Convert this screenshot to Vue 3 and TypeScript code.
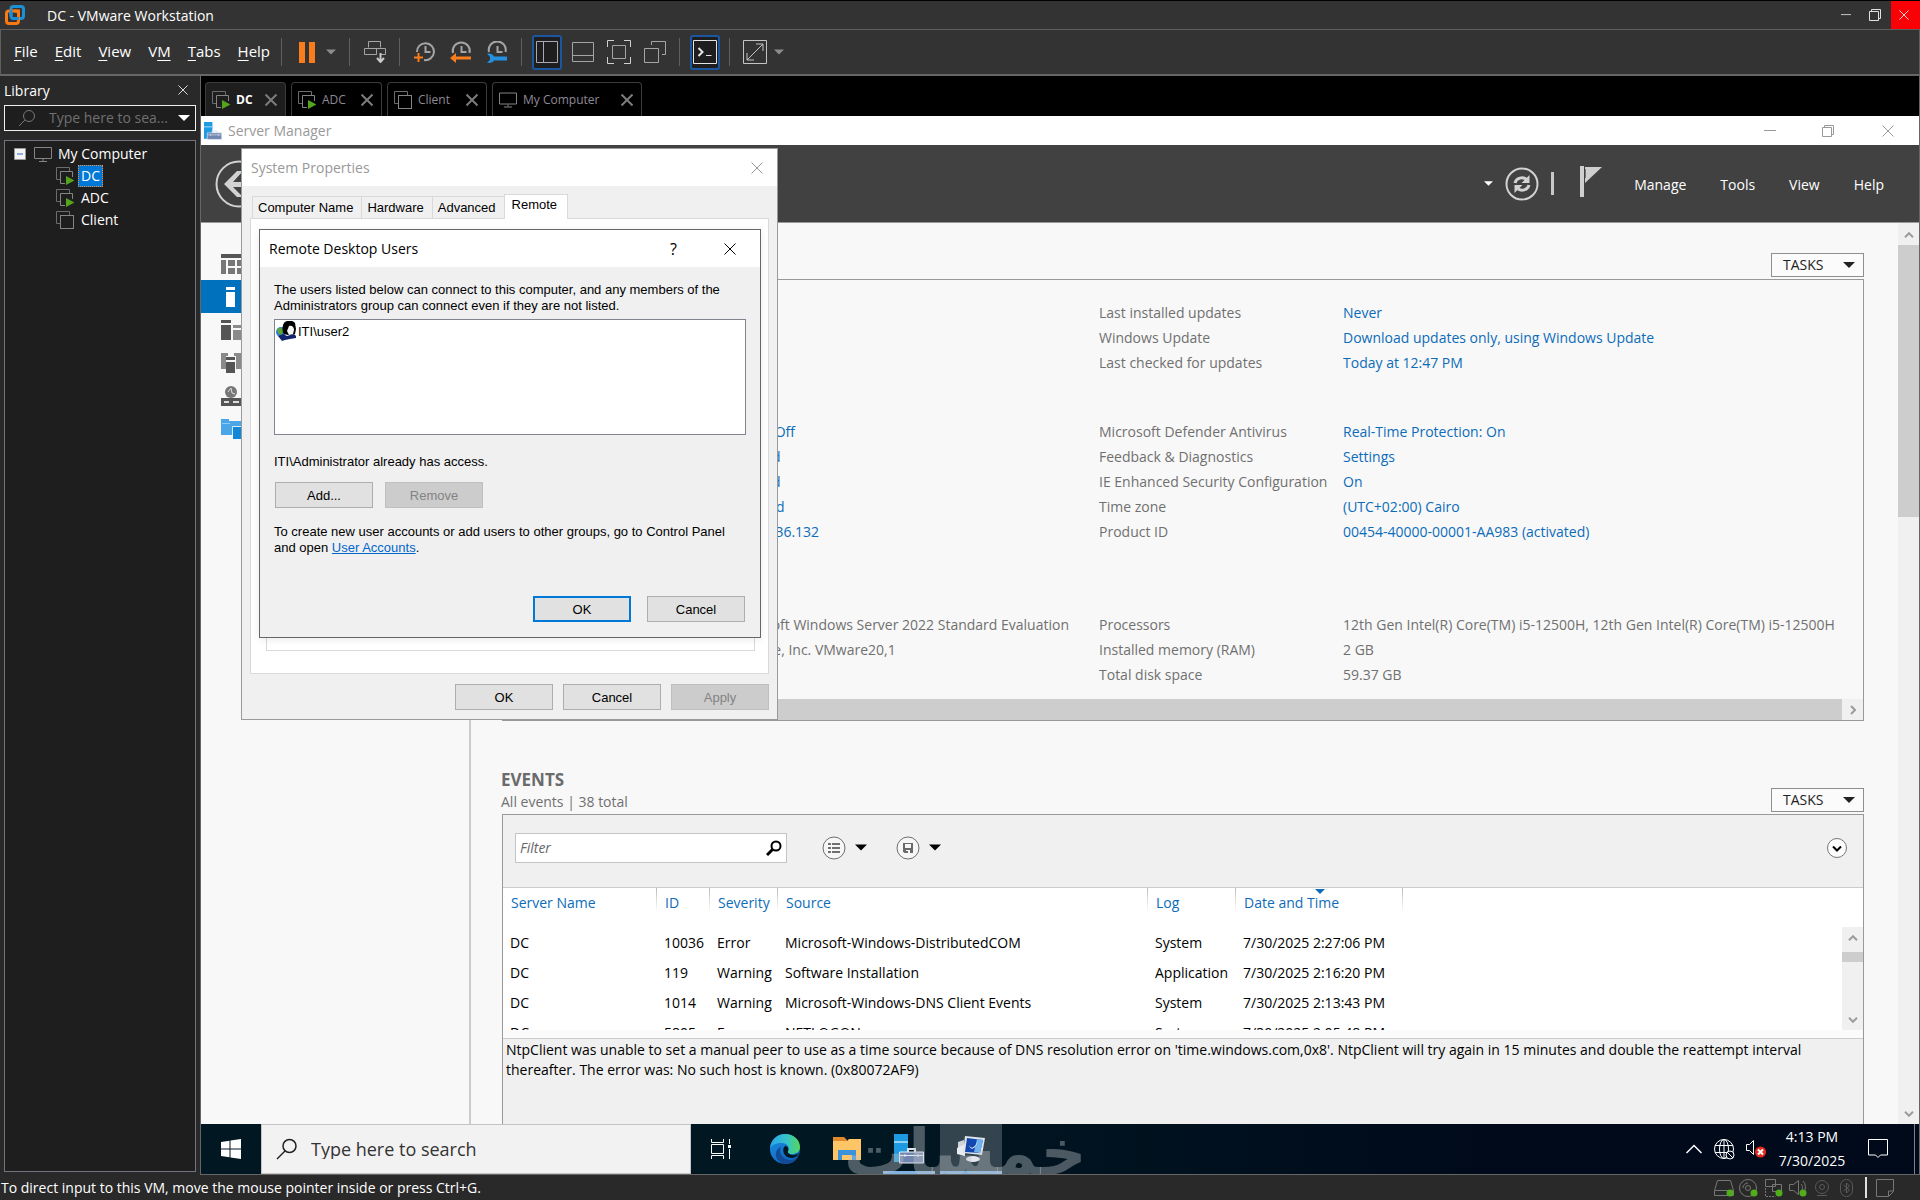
<script setup lang="ts">
interface VmTab { name: string; icon: string; width: number; active?: boolean }
interface PropRow { left: string; label: string; value: string }
interface PropGroup { link: boolean; rows: PropRow[] }
interface EventRow { server: string; id: string; severity: string; source: string; log: string; date: string }

const menus: [string, string, string][] = [
  ['', 'F', 'ile'],
  ['', 'E', 'dit'],
  ['', 'V', 'iew'],
  ['V', 'M', ''],
  ['', 'T', 'abs'],
  ['', 'H', 'elp'],
]

const tabs: VmTab[] = [
  { name: 'DC', icon: '#vm-on', width: 81, active: true },
  { name: 'ADC', icon: '#vm-on', width: 91 },
  { name: 'Client', icon: '#vm-off', width: 100 },
  { name: 'My Computer', icon: '#monitor', width: 150 },
]

const machines = [
  { name: 'DC', icon: '#vm-on', selected: true },
  { name: 'ADC', icon: '#vm-on', selected: false },
  { name: 'Client', icon: '#vm-off', selected: false },
]

const smMenus = ['Manage', 'Tools', 'View', 'Help']

const groups: PropGroup[] = [
  {
    link: true,
    rows: [
      { left: '', label: 'Last installed updates', value: 'Never' },
      { left: '', label: 'Windows Update', value: 'Download updates only, using Windows Update' },
      { left: '', label: 'Last checked for updates', value: 'Today at 12:47 PM' },
    ],
  },
  {
    link: true,
    rows: [
      { left: 'Public: Off', label: 'Microsoft Defender Antivirus', value: 'Real-Time Protection: On' },
      { left: 'Enabled', label: 'Feedback & Diagnostics', value: 'Settings' },
      { left: 'Enabled', label: 'IE Enhanced Security Configuration', value: 'On' },
      { left: 'Disabled', label: 'Time zone', value: '(UTC+02:00) Cairo' },
      { left: '172.16.36.132', label: 'Product ID', value: '00454-40000-00001-AA983 (activated)' },
    ],
  },
  {
    link: false,
    rows: [
      { left: 'Microsoft Windows Server 2022 Standard Evaluation', label: 'Processors', value: '12th Gen Intel(R) Core(TM) i5-12500H, 12th Gen Intel(R) Core(TM) i5-12500H' },
      { left: 'VMware, Inc. VMware20,1', label: 'Installed memory (RAM)', value: '2 GB' },
      { left: '', label: 'Total disk space', value: '59.37 GB' },
    ],
  },
]

const columns = ['Server Name', 'ID', 'Severity', 'Source', 'Log', 'Date and Time']

const events: EventRow[] = [
  { server: 'DC', id: '10036', severity: 'Error', source: 'Microsoft-Windows-DistributedCOM', log: 'System', date: '7/30/2025 2:27:06 PM' },
  { server: 'DC', id: '119', severity: 'Warning', source: 'Software Installation', log: 'Application', date: '7/30/2025 2:16:20 PM' },
  { server: 'DC', id: '1014', severity: 'Warning', source: 'Microsoft-Windows-DNS Client Events', log: 'System', date: '7/30/2025 2:13:43 PM' },
  { server: 'DC', id: '5805', severity: 'Error', source: 'NETLOGON', log: 'System', date: '7/30/2025 2:05:48 PM' },
]

const propTabs = ['Computer Name', 'Hardware', 'Advanced', 'Remote']
</script>

<template>
  <div class="app">
    <svg class="sprite" aria-hidden="true">
      <symbol id="vm-off" viewBox="0 0 18 18">
        <path d="M4 12.5H.5V.5h13V4" fill="none" stroke="#6c6c6c" />
        <rect x="4.5" y="4.5" width="13" height="13" fill="none" stroke="#858585" />
      </symbol>
      <symbol id="vm-on" viewBox="0 0 18 18">
        <path d="M4 12.5H.5V.5h13V4" fill="none" stroke="#6c6c6c" />
        <path d="M9 16.5H4.5v-12h12V10" fill="none" stroke="#858585" />
        <path d="M10 9l8.500 4.500L10 18z" fill="#55a51c" />
      </symbol>
      <symbol id="monitor" viewBox="0 0 18 15">
        <path d="M.5.500h17v11H.5zM9 12v2M5 14.500h8" fill="none" stroke="#858585" />
      </symbol>
      <symbol id="cross" viewBox="0 0 12 12">
        <path d="M.5.500l11 11M11.500.500l-11 11" fill="none" stroke="currentColor" />
      </symbol>
      <symbol id="restore" viewBox="0 0 12 12">
        <path d="M.5 2.500h9v9h-9zM2.500 2.500v-2h9v9h-2" fill="none" stroke="currentColor" />
      </symbol>
      <symbol id="minimize" viewBox="0 0 12 12">
        <path d="M0 5.500h12" fill="none" stroke="currentColor" />
      </symbol>
      <symbol id="tri" viewBox="0 0 12 6">
        <path d="M0 0h12L6 6z" fill="currentColor" />
      </symbol>
      <symbol id="chev" viewBox="0 0 10 6">
        <path d="M1 5.200l4-4 4 4" fill="none" stroke="#9c9c9c" stroke-width="2" />
      </symbol>
      <symbol id="toolbox" viewBox="0 0 32 30">
        <path d="M1 0h14v28H1z" fill="#1e9be0" />
        <path d="M1 8h14" stroke="#8fd0f5" stroke-width="2" />
        <path d="M15 18v-3h7v3" fill="none" stroke="#dfe4ee" stroke-width="2" />
        <path d="M6.500 18h24v11h-24z" fill="#6f86b0" stroke="#e8edf5" />
        <path d="M7 21.500h23M12 20v3M25 20v3" stroke="#e8edf5" />
      </symbol>
    </svg>

    <header class="titlebar">
      <svg class="logo" viewBox="0 0 20 20">
        <rect x="6" y="1.500" width="12.500" height="12" rx="2.500" fill="none" stroke="#1c8fd6" stroke-width="3" />
        <rect x="1.500" y="6" width="12" height="12.500" rx="2.500" fill="none" stroke="#f97a14" stroke-width="3" />
        <path d="M6 5v6M7 13.500h7" stroke="#1c8fd6" stroke-width="3" fill="none" />
        <path d="M9 6h4.500v3" stroke="#f97a14" stroke-width="3" fill="none" />
      </svg>
      <h1>DC - VMware Workstation</h1>
      <button class="wbtn" aria-label="Minimize"><svg width="10" height="10"><use href="#minimize" /></svg></button>
      <button class="wbtn" aria-label="Restore"><svg width="12" height="12"><use href="#restore" /></svg></button>
      <button class="wbtn danger" aria-label="Close"><svg width="10" height="10"><use href="#cross" /></svg></button>
    </header>

    <div class="toolbar">
      <nav class="menus">
        <button v-for="m in menus" :key="m.join('')">{{ m[0] }}<u>{{ m[1] }}</u>{{ m[2] }}</button>
      </nav>
      <i class="sep"></i>
      <button class="tool" aria-label="Suspend"><svg width="16" height="21" viewBox="0 0 16 21"><path d="M0 0h6v21H0zM10 0h6v21h-6z" fill="#f97d1c" /></svg></button>
      <button class="drop" aria-label="Power menu"><svg width="10" height="6"><use href="#tri" /></svg></button>
      <i class="sep"></i>
      <button class="tool" aria-label="Send keys"><svg width="22" height="22" viewBox="0 0 22 22" fill="none" stroke="#a5a5a5"><path d="M4.500 6.500v-6h12v6M.500 7.500h12v6H.500zM12.500 13.500v-6h9v6h-5" /><path d="M16.500 12v8M13 17l3.500 4 3.500-4" stroke="#c8c8c8" stroke-width="2" /></svg></button>
      <i class="sep"></i>
      <button class="tool" aria-label="Take snapshot"><svg width="22" height="22" viewBox="0 0 22 22" fill="none"><path d="M3 11a8.500 8.500 0 1 1 7 8M11.500 5v6h5" stroke="#a5a5a5" stroke-width="2" /><path d="M0 16.500h9M4.500 12v9" stroke="#f97d1c" stroke-width="2" /></svg></button>
      <button class="tool" aria-label="Revert snapshot"><svg width="22" height="22" viewBox="0 0 22 22" fill="none"><path d="M3 12a8.500 8.500 0 1 1 16.500 0M11.500 5v6h5" stroke="#a5a5a5" stroke-width="2" /><path d="M0 17l6-5v3.500h15v3H6V22z" fill="#f97d1c" /></svg></button>
      <button class="tool" aria-label="Manage snapshots"><svg width="22" height="22" viewBox="0 0 22 22" fill="none"><path d="M3 11a8.500 8.500 0 1 1 16.500 0M11.500 5v6h5" stroke="#a5a5a5" stroke-width="2" /><path d="M1 12.500c3 0 6 .500 7 3h13v4H8c-1 2-4 3-7 2l3-2.500v-3z" fill="#2490df" /></svg></button>
      <i class="sep"></i>
      <button class="tool" aria-label="Show library"><span class="on"><svg width="22" height="22" viewBox="0 0 22 22" fill="none" stroke="#a9a9b3"><path d="M.500.500h21v21H.500zM7.500 1v20" /></svg></span></button>
      <button class="tool" aria-label="Thumbnail bar"><svg width="22" height="22" viewBox="0 0 22 22" fill="none" stroke="#a5a5a5"><path d="M.500 1.500h21v19H.500zM1 14.500h20" /></svg></button>
      <button class="tool" aria-label="Full screen"><svg width="24" height="24" viewBox="0 0 24 24" fill="none"><path d="M.500 7V.500H7M17 .500h6.500V7M23.500 17v6.500H17M7 23.500H.500V17" stroke="#d0d0d0" /><path d="M5.500 5.500h13v13h-13z" stroke="#a5a5a5" /></svg></button>
      <button class="tool" aria-label="Unity"><svg width="22" height="22" viewBox="0 0 22 22" fill="none" stroke="#a5a5a5"><path d="M.500 7.500h14v14H.500zM7.500 4V.500h14v13H18" /></svg></button>
      <i class="sep"></i>
      <button class="tool" aria-label="Console view"><span class="on"><svg width="24" height="24" viewBox="0 0 24 24" fill="none" stroke="#e4e4e4"><path d="M.500.500h23v23H.500z" /><path d="M5.500 8l4 4-4 4" stroke-width="2" /><path d="M13 15.500h5.500" /></svg></span></button>
      <i class="sep"></i>
      <button class="tool" aria-label="Stretch"><svg width="24" height="24" viewBox="0 0 24 24" fill="none" stroke="#c4c4c4"><path d="M.500.500h23v23H.500zM4 20L20 4M13 4h7v7M4 13v7h7" /></svg></button>
      <button class="drop" aria-label="Stretch menu"><svg width="10" height="6"><use href="#tri" /></svg></button>
    </div>

    <div class="body">
      <aside class="library">
        <div class="lib-head"><h2>Library</h2><button aria-label="Close library"><svg width="10" height="10"><use href="#cross" /></svg></button></div>
        <label class="lib-search">
          <svg width="18" height="18" viewBox="0 0 18 18" fill="none" stroke="#777"><circle cx="11" cy="7" r="5.500" /><path d="M7 11l-6 6" /></svg>
          <input type="text" placeholder="Type here to sea..." aria-label="Search library" />
          <svg class="lib-tri" width="12" height="6"><use href="#tri" /></svg>
        </label>
        <div class="tree">
          <div class="node root">
            <svg width="12" height="12" viewBox="0 0 12 12"><path d="M.500.500h11v11H.500z" fill="#f4f4f4" stroke="#9a9a9a" /><path d="M3 6h6" stroke="#2a62c4" /></svg>
            <svg class="mon" width="18" height="15"><use href="#monitor" /></svg>
            <span>My Computer</span>
          </div>
          <div v-for="m in machines" :key="m.name" class="node leaf">
            <svg width="18" height="18"><use :href="m.icon" /></svg>
            <span :class="{ sel: m.selected }">{{ m.name }}</span>
          </div>
        </div>
      </aside>

      <main class="stage">
        <div class="tabs">
          <div v-for="t in tabs" :key="t.name" class="tab" :class="{ active: t.active }" :style="{ width: t.width + 'px' }">
            <svg width="18" height="18"><use :href="t.icon" /></svg>
            <span>{{ t.name }}</span>
            <button :aria-label="'Close ' + t.name"><svg width="12" height="12"><use href="#cross" stroke-width="2" /></svg></button>
          </div>
        </div>

        <div class="screen">
          <div class="sm-title">
            <svg width="20" height="18"><use href="#toolbox" /></svg>
            <span>Server Manager</span>
            <div class="sm-ctl">
              <button aria-label="Minimize"><svg width="12" height="12"><use href="#minimize" /></svg></button>
              <button aria-label="Restore"><svg width="12" height="12"><use href="#restore" /></svg></button>
              <button aria-label="Close"><svg width="12" height="12"><use href="#cross" /></svg></button>
            </div>
          </div>

          <div class="sm-head">
            <button class="back" aria-label="Back"><svg width="48" height="48" viewBox="0 0 48 48" fill="none" stroke="#d2d2d2"><circle cx="24" cy="24" r="22.500" stroke-width="2" /><path d="M9 24L22 11h6L18 22h22v5H18l10 10h-6z" fill="#d2d2d2" stroke="none" /></svg></button>
            <svg class="h-tri" width="9" height="5"><use href="#tri" /></svg>
            <button aria-label="Refresh"><svg width="34" height="34" viewBox="0 0 34 34" fill="none" stroke="#d2d2d2"><circle cx="17" cy="17" r="15.500" stroke-width="2" /><path d="M10 16c1-5 8-7 12-3M24 18c-1 5-8 7-12 3" stroke-width="3" /><path d="M24.500 8v8h-8zM9.500 26v-8h8z" fill="#d2d2d2" stroke="none" /></svg></button>
            <i class="pipe"></i>
            <svg class="flag" width="22" height="31" viewBox="0 0 22 31"><path d="M0 0h4v31H0z" fill="#cfcfcf" /><path d="M5 1h17L5 17z" fill="#cfcfcf" /><path d="M5.500 3v9" stroke="#777" /></svg>
            <nav><button v-for="m in smMenus" :key="m">{{ m }}</button></nav>
          </div>

          <div class="sm-body">
            <nav class="side">
              <a href="#" aria-label="Dashboard"><svg width="24" height="20" viewBox="0 0 24 20"><path d="M0 0h24v4H0z" fill="#555" /><path d="M0 6h5v14H0zM7 6h7v6H7zM16 6h8v6h-8zM7 14h7v6H7zM16 14h8v6h-8z" fill="#777" /></svg></a>
              <a href="#" class="cur" aria-label="Local Server"><svg width="24" height="20" viewBox="0 0 24 20"><path d="M5 0h9v3H5zM5 5h9v15H5z" fill="#fff" /></svg></a>
              <a href="#" aria-label="All Servers"><svg width="24" height="20" viewBox="0 0 24 20"><path d="M0 0h10v3H0zM0 5h10v15H0z" fill="#555" /><path d="M12 5h12v3H12zM12 10h12v10H12z" fill="#8a8a8a" /></svg></a>
              <a href="#" aria-label="AD DS"><svg width="24" height="20" viewBox="0 0 24 20"><path d="M0 0h7v3H5v13H0zM13 0h7v16h-5V3h-2z" fill="#8a8a8a" /><path d="M5 4h9v3H5zM5 9h9v11H5z" fill="#555" /></svg></a>
              <a href="#" aria-label="DNS"><svg width="24" height="20" viewBox="0 0 24 20"><circle cx="10" cy="6" r="6" fill="#777" /><path d="M7 6l3-4 1 5 3 1" stroke="#ddd" fill="none" /><path d="M0 12h24v8H0z" fill="#555" /><path d="M3 16h5M12 16h6" stroke="#ddd" stroke-width="2" /></svg></a>
              <a href="#" aria-label="File Services"><svg width="24" height="20" viewBox="0 0 24 20"><path d="M0 0h8v2h12v14H0z" fill="#4aa6e6" /><path d="M1 4.500h8" stroke="#8fcaf2" /><path d="M12 8h12v12H12z" fill="#1488d8" /><path d="M11.500 16V7.500H24" stroke="#d5ecfa" fill="none" /></svg></a>
            </nav>

            <section class="content">
              <div class="sec-head first"><button class="tasks">TASKS<svg width="12" height="6"><use href="#tri" /></svg></button></div>
              <div class="props">
                <dl v-for="(g, i) in groups" :key="i" :class="{ plain: !g.link }">
                  <template v-for="r in g.rows" :key="r.label">
                    <dd><a v-if="g.link" href="#">{{ r.left }}</a><template v-else>{{ r.left }}</template></dd>
                    <dt>{{ r.label }}</dt>
                    <dd><a v-if="g.link" href="#">{{ r.value }}</a><template v-else>{{ r.value }}</template></dd>
                  </template>
                </dl>
                <div class="hscroll"><i></i><svg width="6" height="10" viewBox="0 0 6 10"><path d="M1 1l4 4-4 4" fill="none" stroke="#9c9c9c" stroke-width="2" /></svg></div>
              </div>

              <div class="sec-head">
                <div><h3>EVENTS</h3><p>All events | 38 total</p></div>
                <button class="tasks">TASKS<svg width="12" height="6"><use href="#tri" /></svg></button>
              </div>
              <div class="events">
                <div class="filterbar">
                  <label class="filter"><input type="text" placeholder="Filter" aria-label="Filter" /><svg width="16" height="16" viewBox="0 0 16 16" fill="none" stroke="#000" stroke-width="2"><circle cx="10" cy="6" r="4.500" /><path d="M7 9l-6 6" stroke-width="3" /></svg></label>
                  <button class="round" aria-label="View options"><svg width="24" height="24" viewBox="0 0 24 24"><circle cx="12" cy="12" r="11" fill="#f6f6f6" stroke="#6f6f6f" /><path d="M6 8h3M6 12h3M6 16h3M10 8h8M10 12h8M10 16h8" stroke="#6f6f6f" stroke-width="2" /></svg><svg width="12" height="7"><use href="#tri" /></svg></button>
                  <button class="round" aria-label="Saved queries"><svg width="24" height="24" viewBox="0 0 24 24"><circle cx="12" cy="12" r="11" fill="#f6f6f6" stroke="#6f6f6f" /><path d="M7 7h10v10H8.500L7 15.500z" fill="#6a6a6a" /><path d="M9 8h6v4H9z" fill="#f6f6f6" /><path d="M10 14h4v3h-2v-2h-2z" fill="#f6f6f6" /></svg><svg width="12" height="7"><use href="#tri" /></svg></button>
                  <button class="expand" aria-label="Expand"><svg width="20" height="20" viewBox="0 0 20 20"><circle cx="10" cy="10" r="9.500" fill="#fdfdfd" stroke="#777" /><path d="M6 8.500l4 4 4-4" fill="none" stroke="#000" stroke-width="2" /></svg></button>
                </div>
                <div class="grid">
                  <table>
                    <colgroup><col class="c1" /><col class="c2" /><col class="c3" /><col class="c4" /><col class="c5" /><col class="c6" /><col /></colgroup>
                    <thead>
                      <tr>
                        <th v-for="(c, i) in columns" :key="c" :class="{ sorted: i === 5 }" scope="col">{{ c }}</th>
                        <td></td>
                      </tr>
                    </thead>
                    <tbody>
                      <tr v-for="e in events" :key="e.id">
                        <td>{{ e.server }}</td><td>{{ e.id }}</td><td>{{ e.severity }}</td><td>{{ e.source }}</td><td>{{ e.log }}</td><td>{{ e.date }}</td><td></td>
                      </tr>
                    </tbody>
                  </table>
                  <div class="vs small"><svg width="10" height="6"><use href="#chev" /></svg><i></i><svg class="dn" width="10" height="6"><use href="#chev" /></svg></div>
                </div>
                <p class="detail">NtpClient was unable to set a manual peer to use as a time source because of DNS resolution error on 'time.windows.com,0x8'. NtpClient will try again in 15 minutes and double the reattempt interval<br />thereafter. The error was: No such host is known. (0x80072AF9)</p>
              </div>
            </section>
            <div class="vs main"><svg width="10" height="6"><use href="#chev" /></svg><i></i><svg class="dn" width="10" height="6"><use href="#chev" /></svg></div>
          </div>

          <div class="taskbar">
            <button class="start" aria-label="Start"><svg width="20" height="20" viewBox="0 0 20 20" fill="#fff"><path d="M0 3l8.500-1.300v7.800H0zM9.500 1.500L20 0v9.500H9.500zM0 10.500h8.500v7.800L0 17zM9.500 10.500H20V20L9.500 18.500z" /></svg></button>
            <label class="tb-search">
              <svg width="22" height="22" viewBox="0 0 22 22" fill="none" stroke="#222" stroke-width="1.500"><circle cx="13.500" cy="8" r="6.500" /><path d="M9 13l-8 8" /></svg>
              <input type="text" placeholder="Type here to search" aria-label="Type here to search" />
            </label>
            <button class="app-btn view" aria-label="Task View"><svg width="20" height="20" viewBox="0 0 20 20" fill="none" stroke="#fff"><path d="M.500 5.500h12v9H.500zM.500 0v3.500h12V0M.500 20v-3.500h12V20M18.500 0v5M18.500 10v10" /><path d="M17 6h3v3h-3z" fill="#fff" stroke="none" /></svg></button>
            <button class="app-btn" aria-label="Edge">
              <svg width="30" height="30" viewBox="0 0 30 30">
                <defs>
                  <linearGradient id="eg1" x1="0" y1="0" x2="1" y2="0"><stop offset="0" stop-color="#2aa5e8" /><stop offset=".55" stop-color="#35c2cc" /><stop offset="1" stop-color="#55d858" /></linearGradient>
                  <linearGradient id="eg2" x1="0" y1="0" x2="1" y2="1"><stop offset="0" stop-color="#1b8fe0" /><stop offset="1" stop-color="#0a5bb8" /></linearGradient>
                </defs>
                <circle cx="15" cy="15" r="15" fill="url(#eg2)" />
                <path d="M0 14C1 5 8 0 15 0c9 0 15 6 15 13 0 5-4 7-8 7-3 0-5-1-4-3 2-4-1-8-6-8-6 0-10 2-12 5z" fill="url(#eg1)" />
                <path d="M11 13c-3 6 2 13 10 13 3 0 5-1 7-3-4 8-14 9-19 4-5-4-4-12 2-14z" fill="#124a96" />
                <path d="M15 12c3 0 4 3 3 5-1 2 2 4 5 4 3 0 5-1 6-2-1 3-4 5-8 5-7 0-10-9-6-12z" fill="#011722" />
              </svg>
            </button>
            <button class="app-btn" aria-label="File Explorer"><svg width="28" height="25" viewBox="0 0 28 25"><path d="M0 0h11l3 3v5H0z" fill="#e08a2c" /><path d="M0 4h14l2-2h12v21H0z" fill="#fdc566" /><path d="M5 23V13h18v10h-4v-5H9v5z" fill="#3a92dd" /><path d="M9 18h10v5H9z" fill="#fdc566" /></svg></button>
            <button class="app-btn open" aria-label="Server Manager"><svg width="32" height="30"><use href="#toolbox" /></svg></button>
            <button class="app-btn open current" aria-label="System Properties"><svg width="28" height="26" viewBox="0 0 28 26"><path d="M1 6l6-2v16l-6-3z" fill="#cfd4d8" /><path d="M0 12l8-4v12l-8-2z" fill="#e9ecee" /><path d="M8 0l20 2-3 17-19-2z" fill="#dfe4ea" /><path d="M10 2l16 2-3 13-15-1z" fill="#1247b0" /><path d="M20 3l6 1-3 13-6-1z" fill="#6fb0ee" /><path d="M12 9c2 4 5 4 9-4-2 7-7 11-9 4z" fill="#e8f2fb" /><ellipse cx="16" cy="23" rx="7" ry="3" fill="#e4e8ec" /></svg></button>
            <span class="watermark" aria-hidden="true">خمسات</span>
            <div class="tray">
              <svg width="16" height="10" viewBox="0 0 16 10" fill="none" stroke="#fff"><path d="M.500 9L8 1.500 15.500 9" stroke-width="1.500" /></svg>
              <svg width="21" height="21" viewBox="0 0 21 21" fill="none" stroke="#fff"><circle cx="10" cy="10" r="9.500" /><ellipse cx="10" cy="10" rx="4.500" ry="9.500" /><path d="M1 6.500h18M1 13.500h18M10 0v20" /><circle cx="16" cy="16" r="4" fill="#000a1a" /><path d="M13 13l6 6" /></svg>
              <svg width="20" height="18" viewBox="0 0 20 18" fill="none"><path d="M.500 4.500h3l4-4v14l-4-4h-3z" stroke="#fff" /><circle cx="14.500" cy="12" r="5.500" fill="#e62a1c" /><path d="M12 9.500l5 5M17 9.500l-5 5" stroke="#fff" stroke-width="2" /></svg>
              <div class="clock"><span>4:13 PM</span><span>7/30/2025</span></div>
              <svg class="note" width="20" height="20" viewBox="0 0 20 20" fill="none" stroke="#fff"><path d="M.500.500h19v15.500h-7L10 18.500 7.500 16h-7z" /></svg>
              <i class="peek"></i>
            </div>
          </div>

          <section class="dialog sysprops">
            <div class="dlg-title"><h2>System Properties</h2><button aria-label="Close"><svg width="12" height="12"><use href="#cross" /></svg></button></div>
            <div class="dlg-tabs"><button v-for="t in propTabs" :key="t" :class="{ active: t === 'Remote' }">{{ t }}</button></div>
            <div class="pane"><div class="groupbox"></div></div>
            <div class="dlg-btns"><button class="btn">OK</button><button class="btn">Cancel</button><button class="btn" disabled>Apply</button></div>
          </section>

          <section class="dialog rdu">
            <div class="dlg-title"><h2>Remote Desktop Users</h2><button class="help" aria-label="Help">?</button><button aria-label="Close"><svg width="12" height="12"><use href="#cross" /></svg></button></div>
            <div class="rdu-body">
              <p>The users listed below can connect to this computer, and any members of the<br />Administrators group can connect even if they are not listed.</p>
              <ul class="list">
                <li>
                  <svg width="20" height="20" viewBox="0 0 20 20"><circle cx="5" cy="11" r="5" fill="#2f7fd0" /><path d="M1 9c2-3 5-3 6 0l-1 5-3-1z" fill="#5ea832" /><path d="M8 2c2-3 9-3 11 0l1 6-1 5-7 1-4-1c-2-2-2-8 0-11z" fill="#000" /><path d="M13 5c3-1 5 1 5 4l-1 4-4 1-2-4z" fill="#f5f5f5" /><path d="M2 15l5-2 4 2 3-1 4-1 2 2v2l-6 1-5 1-3 1z" fill="#12246e" /></svg>
                  <span>ITI\user2</span>
                </li>
              </ul>
              <p>ITI\Administrator already has access.</p>
              <div class="pair"><button class="btn">Add...</button><button class="btn" disabled>Remove</button></div>
              <p>To create new user accounts or add users to other groups, go to Control Panel<br />and open <a href="#">User Accounts</a>.</p>
              <div class="end"><button class="btn default">OK</button><button class="btn">Cancel</button></div>
            </div>
          </section>
        </div>
      </main>
    </div>

    <footer class="status">
      <span>To direct input to this VM, move the mouse pointer inside or press Ctrl+G.</span>
      <div class="devices">
        <svg width="20" height="18" viewBox="0 0 20 18" fill="none" stroke="#777"><path d="M3.500 1.500h13l3 10v5H.500v-5zM1 11.500h18" /><circle cx="16" cy="14" r="3.500" fill="#4fae1a" stroke="none" /></svg>
        <svg width="20" height="18" viewBox="0 0 20 18" fill="none" stroke="#777"><circle cx="9" cy="9" r="8.500" /><circle cx="9" cy="9" r="2.500" /><path d="M4 9a5 5 0 0 1 5-5" /><circle cx="15" cy="14" r="3.500" fill="#4fae1a" stroke="none" /></svg>
        <svg width="20" height="18" viewBox="0 0 20 18" fill="none" stroke="#777"><path d="M1.500.500h10v7h-10zM8.500 5.500h9v7h-9z" /><path d="M1.500 9v8.500h10" stroke-dasharray="2 1" /><circle cx="15" cy="14" r="3.500" fill="#4fae1a" stroke="none" /></svg>
        <svg width="20" height="18" viewBox="0 0 20 18" fill="none" stroke="#777"><path d="M.500 5.500h4l5-4v14l-5-4h-4zM12 5c2 2 2 5 0 7M14 2c3 3 3 8 1 11" /><circle cx="14" cy="14" r="3.500" fill="#4fae1a" stroke="none" /></svg>
        <svg width="20" height="18" viewBox="0 0 20 18" fill="none" stroke="#5a5a5a"><circle cx="8" cy="8" r="6.500" /><circle cx="8" cy="8" r="2.500" /><path d="M3 16.500h10" /></svg>
        <svg width="20" height="18" viewBox="0 0 20 18" fill="none" stroke="#5a5a5a"><rect x="1.500" y=".500" width="12" height="17" rx="6" /><path d="M4.500 6l6 5-3 3V4l3 3-6 5" /></svg>
        <i></i>
        <svg width="19" height="18" viewBox="0 0 19 18" fill="none" stroke="#777"><path d="M.500.500h17v12l-5 5H.500zM12.500 17v-5h5" /></svg>
      </div>
    </footer>
  </div>
</template>

<style>
body { margin: 0; }
</style>

<style scoped>
.app, .app * { box-sizing: border-box; }
.app {
  display: flex; flex-direction: column; height: 100vh; min-height: 1000px; overflow: hidden;
  background: #292929; color: #fff; font: 14px/20px "Open Sans", "Noto Sans", sans-serif;
  border-top: 1px solid #000;
}
button { border: 0; padding: 0; margin: 0; background: none; color: inherit; font: inherit; display: flex; align-items: center; justify-content: center; flex: none; }
input { border: 0; padding: 0; background: none; font: inherit; color: inherit; outline: none; min-width: 0; }
h1, h2, h3, p, dl, dd, dt, ul { margin: 0; padding: 0; font-weight: 400; font-size: inherit; }
svg { flex: none; display: block; }
a { color: #0c6cb9; text-decoration: none; }
.sprite { position: absolute; width: 0; height: 0; }

.titlebar { display: flex; align-items: center; height: 28px; background: #333; padding-left: 5px; flex: none; }
.logo { width: 20px; height: 20px; }
.titlebar h1 { margin-left: 22px; margin-right: auto; padding-top: 1px; }
.wbtn { width: 29px; height: 28px; color: #e0e0e0; padding-right: 3px; }
.danger { background: #fb0007; color: #fff; }

.toolbar { display: flex; align-items: center; height: 47px; flex: none; background: #333; border: 1px solid #5f5f5f; border-bottom: 2px solid #666; }
.menus { display: flex; width: 280px; gap: 17px; padding: 0 0 2px 13px; flex: none; font-size: 15px; }
.menus u { text-underline-offset: 3px; }
.sep { width: 1px; height: 28px; background: #5f5f5f; margin: 0 7px 0 6px; flex: none; }
.menus + .sep { margin-left: 0; }
.tool { width: 36px; height: 36px; }
.drop { width: 18px; height: 36px; justify-content: flex-start; padding-left: 1px; color: #8c8c8c; }
.on { display: flex; align-items: center; justify-content: center; width: 30px; height: 35px; border: 2px solid #1b57a0; border-radius: 3px; background: #1e1e1e; }

.body { display: flex; flex: 1; min-height: 0; }
.library { width: 200px; flex: none; padding: 5px 4px 3px; display: flex; flex-direction: column; }
.lib-head { display: flex; justify-content: space-between; align-items: center; height: 20px; padding-right: 8px; }
.lib-head button { height: 18px; align-self: flex-start; }
.lib-search { display: flex; align-items: center; height: 26px; margin-top: 4px; border: 1px solid #f0f0f0; background: #1e1e1e; padding: 0 5px 0 13px; }
.lib-search input { flex: 1; margin-left: 13px; }
.lib-search input::placeholder { color: #707070; opacity: 1; }
.tree { flex: 1; margin-top: 9px; border: 1px solid #74747c; background: #1e1e1e; padding-top: 2px; }
.node { display: flex; align-items: center; height: 22px; }
.root { padding-left: 9px; }
.mon { margin: 0 6px 0 8px; }
.leaf { padding-left: 51px; }
.leaf span { padding: 1px 3px; margin-left: 4px; }
.leaf .sel { background: #0078d7; outline: 1px dotted #f58a3a; outline-offset: -1px; }

.stage { flex: 1; min-width: 0; display: flex; flex-direction: column; border: solid #666; border-width: 0 1px 1px; background: #000; }
.tabs { display: flex; align-items: flex-end; gap: 5px; height: 40px; padding-left: 4px; flex: none; }
.tab { display: flex; align-items: center; height: 34px; border: 1px solid #3c3c3c; border-bottom: 0; border-radius: 4px 4px 0 0; padding: 0 8px 0 6px; font-size: 12px; color: #8f8896; }
.tab span { margin-left: 6px; margin-right: auto; }
.tab.active { background: #1e1e1e; color: #fff; font-weight: 700; }
.tab button { color: #7c7c7c; }

.screen { flex: 1; min-height: 0; display: flex; flex-direction: column; position: relative; background: #f8f8f8; overflow: hidden; color: #000; }
.sm-title { height: 29px; flex: none; display: flex; align-items: center; background: #fff; color: #999; padding-left: 2px; }
.sm-title > span { margin-left: 5px; }
.sm-ctl { margin-left: auto; display: flex; }
.sm-ctl button { width: 58px; height: 29px; }
.sm-ctl button:last-child { width: 62px; }
.sm-head { height: 78px; flex: none; display: flex; align-items: center; background: #414141; border-bottom: 1px solid #999; color: #fff; padding: 0 35px 0 14px; }
.h-tri { margin-left: auto; margin-right: 12px; }
.pipe { width: 3px; height: 23px; background: #c8c8c8; margin: 0 26px 0 12px; }
.flag { margin-right: 32px; margin-bottom: 4px; }
.sm-head nav { display: flex; gap: 34px; padding-top: 2px; }
.sm-body { flex: 1; min-height: 0; display: flex; }
.side { width: 270px; flex: none; border-right: 2px solid #ccc; padding-top: 24px; }
.side a { display: flex; align-items: center; height: 33px; padding-left: 20px; }
.side .cur { background: #0072bd; }
.content { flex: 1; min-width: 0; display: flex; flex-direction: column; padding: 0 34px 0 30px; overflow: hidden; }
.sec-head { display: flex; justify-content: space-between; align-items: flex-end; padding-bottom: 2px; height: 93px; flex: none; color: #707070; }
.first { height: 56px; justify-content: flex-end; }
.tasks { width: 93px; height: 24px; border: 1px solid #8f8f8f; background: #fbfbfb; color: #222; justify-content: space-between; padding: 0 8px 0 11px; }
h3 { font-size: 17px; line-height: 24px; font-weight: 700; color: #6b6b6b; }
.props { position: relative; border: 1px solid #999; height: 442px; flex: none; padding-top: 20px; margin-left: 1px; }
.props dl { display: grid; grid-template-columns: 371px 244px 1fr; grid-auto-rows: 25px; line-height: 25px; padding-left: 225px; margin-bottom: 44px; white-space: nowrap; color: #707070; }
.props dl:nth-child(2) { margin-bottom: 68px; }
.props .plain { margin-bottom: 12px; }
.hscroll { display: flex; align-items: center; height: 21px; background: #f0f0f0; }
.hscroll i { flex: 1; height: 21px; background: #cdcdcd; margin-right: 8px; }
.hscroll svg { margin-right: 7px; }
.events { flex: 1; display: flex; flex-direction: column; border: 1px solid #999; border-bottom: 0; background: #f0f0f0; margin-left: 1px; }
.filterbar { display: flex; align-items: center; height: 73px; flex: none; padding: 0 16px 7px 12px; border-bottom: 1px solid #ccc; }
.filter { display: flex; align-items: center; width: 272px; height: 30px; border: 1px solid #c4c4c4; background: #fff; padding: 0 4px; }
.filter input { flex: 1; font-style: italic; }
.filter input::placeholder { color: #666; opacity: 1; }
.round { gap: 9px; margin-left: 35px; }
.round + .round { margin-left: 29px; }
.expand { margin-left: auto; }
.grid { display: flex; height: 142px; flex: none; background: #fff; overflow: hidden; }
table { flex: 1; border-collapse: collapse; table-layout: fixed; width: 100%; height: 160px; }
.c1 { width: 154px; } .c2 { width: 53px; } .c3 { width: 68px; } .c4 { width: 370px; } .c5 { width: 88px; } .c6 { width: 167px; }
th { height: 40px; padding: 5px 0 0 8px; vertical-align: top; text-align: left; font-weight: 400; color: #0c6cb9; background: linear-gradient(#bbb, #fff) right top / 1px 24px no-repeat; white-space: nowrap; position: relative; }
.sorted::after { content: ""; position: absolute; top: 1px; left: 79px; border: 5px solid transparent; border-top: 5px solid #0c6cb9; border-bottom: 0; }
tbody td { height: 30px; padding: 0 0 0 7px; white-space: nowrap; }
.vs { width: 21px; flex: none; display: flex; flex-direction: column; align-items: center; background: #f0f0f0; }
.vs .dn { transform: rotate(180deg); margin-top: auto; }
.vs i { width: 21px; background: #cdcdcd; }
.main { padding: 9px 0 7px; }
.main i { height: 272px; margin-top: 7px; }
.small { margin-top: 39px; padding: 8px 0 7px; }
.small i { height: 10px; margin-top: 11px; }
.detail { margin-top: 8px; border-top: 1px solid #ccc; padding: 1px 3px; box-shadow: 0 -8px 0 #fbfbfb; flex: 1; }

.taskbar { position: relative; display: flex; height: 50px; flex: none; background: linear-gradient(90deg, #011722 40%, #000a1a 75%); color: #fff; overflow: hidden; }
.start { width: 60px; }
.tb-search { width: 430px; display: flex; align-items: center; background: #f2f2f2; border: 1px solid #c4c4c4; padding-left: 14px; color: #222; }
.tb-search input { flex: 1; margin-left: 13px; font-size: 18px; }
.tb-search input::placeholder { color: #333; opacity: 1; }
.app-btn { width: 62px; }
.view { width: 60px; margin-right: 3px; }
.open { border-bottom: 3px solid #82b3e0; border-top: 3px solid transparent; }
.open:not(.current) { width: 52px; margin: 0 5px; }
.current { background: #33444e; border-top-color: #33444e; }
.watermark { position: absolute; left: 643px; top: -16px; font: 700 64px/90px "DejaVu Sans", sans-serif; color: rgba(190, 195, 200, .4); pointer-events: none; }
.tray { margin-left: auto; display: flex; align-items: center; }
.tray > svg { margin-right: 11px; }
.tray > svg:first-child { margin-right: 12px; }
.clock { display: flex; flex-direction: column; align-items: center; width: 70px; line-height: 24px; }
.tray .note { margin: 0 26px 0 21px; }
.peek { width: 1px; height: 50px; background: #7a828a; margin-right: 4px; }

.dialog { position: absolute; display: flex; flex-direction: column; background: #f0f0f0; font: 13px/16px "Liberation Sans", Arial, sans-serif; }
.dlg-title { display: flex; align-items: center; background: #fff; height: 37px; flex: none; font: 14px/20px "Open Sans", "Noto Sans", sans-serif; padding: 0 14px 0 9px; }
.dlg-title h2 { margin-right: auto; }
.sysprops { left: 40px; top: 32px; width: 537px; height: 572px; border: 1px solid #9a9a9a; padding-right: 8px; }
.sysprops .dlg-title { margin-right: -8px; color: #999; }
.dlg-tabs { display: flex; align-items: flex-end; height: 32px; padding-left: 10px; }
.dlg-tabs button { height: 22px; padding: 0 8px 0 5px; border: 1px solid #d9d9d9; border-bottom: 0; border-right-width: 0; }
.dlg-tabs .active { height: 25px; background: #fff; border-right-width: 1px; margin-bottom: -1px; padding: 0 10px 4px 7px; position: relative; }
.pane { height: 456px; margin-left: 8px; border: 1px solid #d9d9d9; background: #fff; padding: 15px 13px 22px 15px; }
.groupbox { height: 100%; border: 1px solid #d9d9d9; }
.dlg-btns { display: flex; justify-content: flex-end; gap: 10px; margin-top: 10px; }
.btn { width: 98px; height: 26px; border: 1px solid #adadad; background: #e1e1e1; color: #000; padding-top: 1px; }
.btn:disabled { background: #ccc; border-color: #bfbfbf; color: #838383; }
.btn.default { border: 2px solid #0078d7; }
.rdu { left: 58px; top: 113px; width: 502px; height: 409px; border: 1px solid #666; box-shadow: 0 2px 8px rgba(0, 0, 0, .08); }
.rdu .dlg-title { padding-right: 24px; }
.help { margin-right: 47px; font-size: 16px; }
.rdu-body { flex: 1; display: flex; flex-direction: column; padding: 15px 14px; }
.rdu p { white-space: nowrap; }
.list { list-style: none; height: 116px; margin: 5px 0 19px; border: 1px solid #7f848e; background: #fff; padding: 1px; }
.list li { display: flex; align-items: center; height: 20px; }
.list span { margin-left: 2px; padding-top: 2px; }
.pair { display: flex; gap: 12px; margin: 12px 0 16px 1px; }
.rdu a { color: #0066cc; text-decoration: underline; }
.end { display: flex; justify-content: flex-end; gap: 16px; margin-top: auto; padding-right: 1px; }

.status { display: flex; align-items: center; justify-content: space-between; height: 25px; flex: none; padding: 0 25px 0 1px; }
.devices { display: flex; align-items: center; gap: 5px; }
.devices i { width: 2px; height: 21px; background: #e0e0e0; margin: 0 4px 0 1px; }
</style>
